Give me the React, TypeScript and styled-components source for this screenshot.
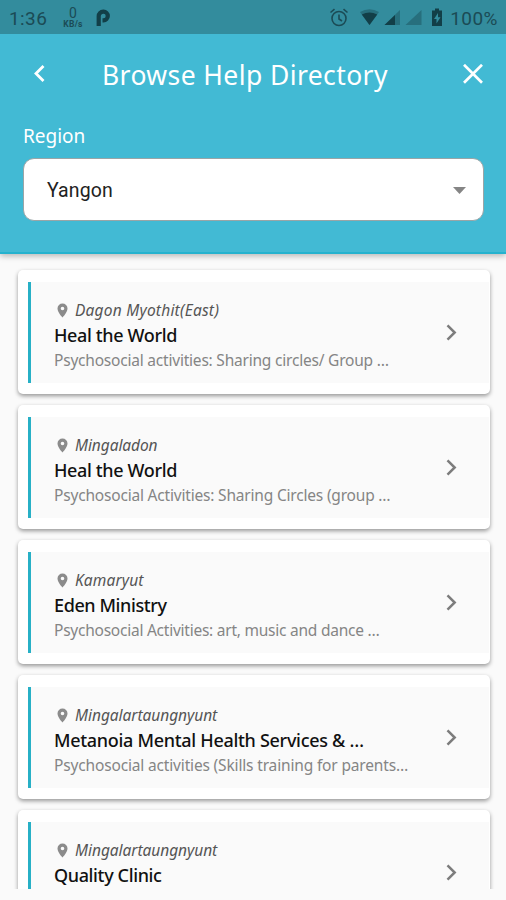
import React from 'react';
import styled, { createGlobalStyle } from 'styled-components';

const GlobalStyle = createGlobalStyle`
  *, *::before, *::after { box-sizing: border-box; }
  body { margin: 0; background: #fafafa; font-family: "Noto Sans", "Open Sans", sans-serif; }
  svg { display: block; flex: none; }
`;

const Screen = styled.main`
  width: 506px;
  height: 900px;
  overflow: hidden;
  display: flex;
  flex-direction: column;
  background: #fafafa;
`;

const StatusBar = styled.div`
  height: 34px;
  flex: none;
  display: flex;
  align-items: center;
  justify-content: space-between;
  padding: 2px 8px 0 9px;
  background: #338c9d;
  color: #1b4b55;
  font-family: Roboto, sans-serif;
  font-size: 19px;
  position: relative;
  z-index: 3;
`;

const StatusGroup = styled.div`
  display: flex;
  align-items: center;
`;

const Clock = styled.span`
  width: 52px;
  letter-spacing: 0.4px;
`;

const Speed = styled.span`
  width: 24px;
  margin: -3px 11px 0 0;
  display: flex;
  flex-direction: column;
  align-items: center;
  font-size: 14px;
  line-height: 16px;
`;

const SpeedUnit = styled.span`
  font-size: 8.500px;
  line-height: 9px;
  margin-top: -1px;
  font-weight: 700;
  letter-spacing: 0.3px;
`;

const Battery = styled.span`
  margin-left: 7px;
  letter-spacing: 0.45px;
`;

const Header = styled.header`
  height: 220px;
  flex: none;
  position: relative;
  z-index: 2;
  padding: 0 23px;
  background: #42bad4;
  border-bottom: 2px solid #25b2ce;
  box-shadow: 0 2px 6px rgba(0, 0, 0, 0.28);
  color: #fff;
`;

const TitleRow = styled.div`
  height: 80px;
  display: flex;
  align-items: center;
`;

const IconButton = styled.button`
  border: 0;
  padding: 0;
  background: none;
  color: inherit;
  display: flex;
`;

const Title = styled.h1`
  margin: 2px 0 0 53px;
  width: 308px;
  flex: none;
  white-space: nowrap;
  font-size: 26.5px;
  line-height: 36px;
  font-weight: 450;
  letter-spacing: 0.4px;
`;

const FieldLabel = styled.label`
  display: block;
  height: 44px;
  padding-top: 9px;
  font-size: 19px;
  line-height: 26px;
  font-weight: 450;
`;

const Select = styled.div`
  width: 461px;
  height: 63px;
  padding: 1px 17px 0 23px;
  display: flex;
  align-items: center;
  justify-content: space-between;
  background: #fff;
  border: 1px solid #9aa5a7;
  border-radius: 11px;
  color: #222;
  font: 19.5px Roboto, sans-serif;
  letter-spacing: 0.1px;
`;

const List = styled.section`
  height: 635px;
  flex: none;
  overflow: hidden;
  display: flex;
  flex-direction: column;
  gap: 11px;
  padding: 16px 16px 0 18px;
`;

const Card = styled.article`
  height: 124px;
  flex: none;
  padding: 12px 1px 11px 10px;
  background: #fff;
  border-radius: 5px;
  box-shadow: 0 2px 4px rgba(0, 0, 0, 0.4);
`;

const CardBody = styled.div`
  height: 101px;
  display: flex;
  align-items: center;
  justify-content: space-between;
  padding: 0 32px 0 23px;
  background: #fafafa;
  border-left: 3px solid #27b0c6;
`;

const CardText = styled.div`
  display: flex;
  flex-direction: column;
  min-height: 80px;
  padding-top: 5px;
`;

type Tracked = { $track: number };

const Place = styled.div<Tracked>`
  display: flex;
  align-items: center;
  gap: 7px;
  padding-left: 3px;
  height: 25px;
  font-size: 15.5px;
  font-style: italic;
  color: #555;
  white-space: nowrap;
  letter-spacing: ${(p) => p.$track}px;
`;

const Name = styled.h2<Tracked>`
  margin: 0;
  font-size: 18px;
  line-height: 25px;
  font-weight: 550;
  color: #111;
  white-space: nowrap;
  letter-spacing: ${(p) => p.$track}px;
`;

const Summary = styled.p<Tracked>`
  margin: 0;
  font-size: 15.5px;
  line-height: 25px;
  color: #858585;
  white-space: nowrap;
  letter-spacing: ${(p) => p.$track}px;
`;

const entries = [
  { place: 'Dagon Myothit(East)', name: 'Heal the World', summary: 'Psychosocial activities: Sharing circles/ Group …', track: [0.22, -0.36, -0.21] },
  { place: 'Mingaladon', name: 'Heal the World', summary: 'Psychosocial Activities: Sharing Circles (group …', track: [-0.08, -0.36, -0.19] },
  { place: 'Kamaryut', name: 'Eden Ministry', summary: 'Psychosocial Activities: art, music and dance …', track: [0.15, -0.4, -0.24] },
  { place: 'Mingalartaungnyunt', name: 'Metanoia Mental Health Services & …', summary: 'Psychosocial activities (Skills training for parents…', track: [-0.04, -0.3, -0.16] },
  { place: 'Mingalartaungnyunt', name: 'Quality Clinic', track: [-0.04, -0.36, 0] },
];

const Pin = () => (
  <svg width="11" height="15" viewBox="0 0 11 15">
    <path fillRule="evenodd" fill="#8b8b8b" d="M5.5.5A5 5 0 0 0 .5 5.5c0 3.7 5 9 5 9s5-5.300 5-9a5 5 0 0 0-5-5Zm0 3.200a1.800 1.800 0 1 1 0 3.600 1.800 1.800 0 0 1 0-3.600Z" />
  </svg>
);

const Chevron = () => (
  <svg width="11" height="17" viewBox="0 0 11 17" fill="none" stroke="#7c7c7c" strokeWidth="2.500">
    <path d="M1.500 1.300 8.700 8.500 1.500 15.700" />
  </svg>
);

const StatusIcons = () => (
  <svg width="114" height="22" viewBox="0 0 114 22">
    <g fill="none" stroke="#1b4b55" strokeWidth="1.600">
      <circle cx="10" cy="11.500" r="7" />
      <path d="M10 7.500v4.500l3 2M1.500 5.500l4-3.300M18.500 5.500l-4-3.300" />
    </g>
    <path fill="#276f7d" d="M31 5Q40.500-.5 50 5L40.500 18Z" />
    <path fill="#123f48" d="M32.800 7.500Q40.500 3.500 48.200 7.500L40.500 18Z" />
    <path fill="#276f7d" d="M71 3v15H55.500Z" />
    <path fill="#123f48" d="M66 8v10H55.500Z" />
    <path fill="#276f7d" d="M92.500 3v15H76.500Z" />
    <path fill="#123f48" d="M106 1.500h4v2h3V19h-10V3.500h3Z" />
    <path fill="#338c9d" d="m109 6-4 6h2.500v4.500l4-6.200H109Z" />
  </svg>
);

export default function App() {
  return (
    <>
      <GlobalStyle />
      <Screen>
        <StatusBar>
          <StatusGroup>
            <Clock>1:36</Clock>
            <Speed>0<SpeedUnit>KB/s</SpeedUnit></Speed>
            <svg width="15" height="18" viewBox="0 0 15 18">
              <path d="M2.700 17V7.200A4.500 4.500 0 0 1 7.200 2.700H7.500A4.300 4.300 0 0 1 7.500 11.300H6.500" fill="none" stroke="#123f48" strokeWidth="4.200" />
            </svg>
          </StatusGroup>
          <StatusGroup>
            <StatusIcons />
            <Battery>100%</Battery>
          </StatusGroup>
        </StatusBar>
        <Header>
          <TitleRow>
            <IconButton aria-label="Back">
              <svg width="26" height="18" viewBox="0 0 26 18" fill="none" stroke="#fff" strokeWidth="2.800">
                <path d="M20.500 1 13 8.500l7.500 7.500" />
              </svg>
            </IconButton>
            <Title>Browse Help Directory</Title>
            <IconButton aria-label="Close">
              <svg width="80" height="20" viewBox="0 0 80 20" fill="none" stroke="#fff" strokeWidth="2.700">
                <path d="m54 .8 18 18M72 .8l-18 18" />
              </svg>
            </IconButton>
          </TitleRow>
          <FieldLabel>Region</FieldLabel>
          <Select>
            Yangon
            <svg width="13" height="7" viewBox="0 0 13 7"><path d="M0 0h13L6.500 7Z" fill="#858585" /></svg>
          </Select>
        </Header>
        <List>
          {entries.map((entry, i) => (
            <Card key={i}>
              <CardBody>
                <CardText>
                  <Place $track={entry.track[0]}><Pin />{entry.place}</Place>
                  <Name $track={entry.track[1]}>{entry.name}</Name>
                  {entry.summary && <Summary $track={entry.track[2]}>{entry.summary}</Summary>}
                </CardText>
                <Chevron />
              </CardBody>
            </Card>
          ))}
        </List>
      </Screen>
    </>
  );
}
